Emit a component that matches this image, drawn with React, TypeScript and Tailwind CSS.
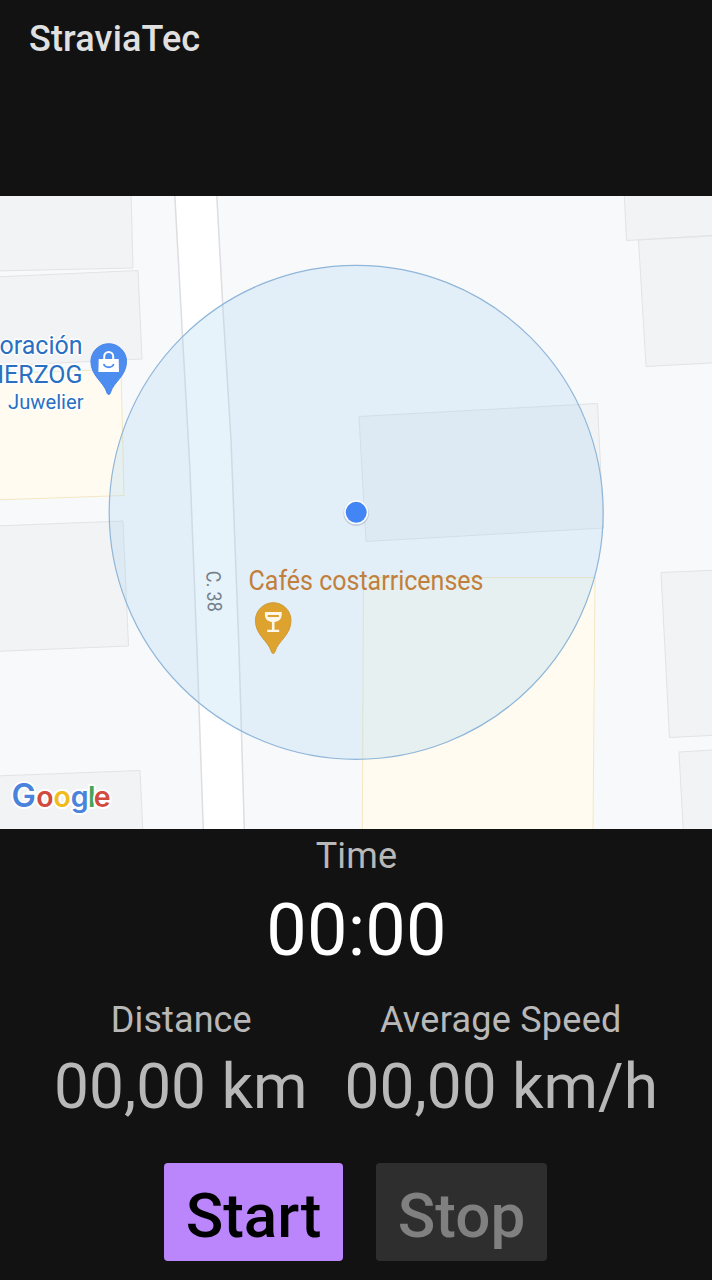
import React from "react";

const buildings = [
  "-5,190 131,190 133,268 -5,271",
  "-5,277 138,270.5 142,359 -5,366",
  "-5,526 123,521 128.500,646 -5,651.5",
  "-5,776 140,770.5 143,835 -5,835",
  "624,190 626.500,240.500 720,235 720,190",
  "638.500,240 646,366.500 720,362.500 720,235.500",
  "661,572.500 669.500,737.500 720,735 720,570",
  "679,752 683.500,835 720,835 720,749.500",
  "359,416.500 597.500,403.500 603.500,528 366,541.500",
];

const shops = [
  "-5,374 121,369 124,495.500 -5,500",
  "363.500,577.500 595,577.500 593,835 362.300,835",
];

function Pin({ x, y, fill, edge, children }: { x: number; y: number; fill: string; edge: string; children: React.ReactNode }) {
  return (
    <g transform={`translate(${x} ${y})`}>
      <path
        d="M0 33C-1.200 33-1.500 32-2 30.500C-5 20.500-17.800 14.500-17.800 0A17.800 17.800 0 0 1 17.800 0C17.800 14.500 5 20.500 2 30.500C1.500 32 1.200 33 0 33Z"
        fill={fill}
        stroke={edge}
        strokeWidth="1"
      />
      {children}
    </g>
  );
}

function MapView() {
  return (
    <svg className="block h-[633px] w-full shrink-0 bg-[#f8f9fb]" viewBox="0 196 712 633" fontFamily="Roboto, sans-serif">
      <g fill="#f1f3f4" stroke="#e1e3e5" strokeWidth="1">
        {buildings.map((p) => (
          <polygon key={p} points={p} />
        ))}
      </g>
      <g fill="#fffbf0" stroke="#f3e8c2" strokeWidth="1">
        {shops.map((p) => (
          <polygon key={p} points={p} />
        ))}
      </g>
      <path d="M174.500 190L183 345L190 470L197 650L203.500 835H244.500L239 650L231 440L223 310L216.500 190Z" fill="#fff" stroke="#dcdee1" strokeWidth="1.500" />
      <circle cx="356.200" cy="512.300" r="247" fill="#a5d4f0" fillOpacity="0.27" stroke="#8fb6d9" strokeWidth="1.200" />

      <g fill="#2a70c2" stroke="#fff" strokeWidth="3" strokeLinejoin="round" paintOrder="stroke" textAnchor="end">
        <text transform="translate(82.500 353.700) scale(0.95 1)" fontSize="26.300">Corporación</text>
        <text transform="translate(82.500 383) scale(0.95 1)" fontSize="26.300">HERZOG</text>
        <text x="83.500" y="408.500" fontSize="20.500" textLength="75.500" lengthAdjust="spacingAndGlyphs">Juwelier</text>
      </g>
      <Pin x={108.700} y={361.500} fill="#4d8df0" edge="#4a85e6">
        <path d="M-10-2.500H10L10.300 10.500H-10.300Z" fill="#fff" />
        <path d="M-4.500-2V-5A4.500 4.500 0 0 1 4.500-5V-2" fill="none" stroke="#fff" strokeWidth="2" />
        <path d="M-5 2.500C-3.500 6.800 3.500 6.800 5 2.500" fill="none" stroke="#4d8df0" strokeWidth="1.800" />
      </Pin>

      <text x="248.500" y="590" fontSize="27" fill="#c17f3c" textLength="235" lengthAdjust="spacingAndGlyphs">
        Cafés costarricenses
      </text>
      <Pin x={273.200} y={620.500} fill="#dea22f" edge="#cf9a3a">
        <path d="M-8.300-8.500H8.500V-5.500C8.500-1.500 5 1.200 1.300 1.500V9.200H6V11.500H-6V9.200H-1.300V1.500C-5 1.200-8.300-1.500-8.300-5.500Z" fill="#fff8ea" />
        <path d="M-5.500-5.500H5.700V-3.500H-5.500Z" fill="#dea22f" />
      </Pin>

      <text transform="translate(206.300 571) rotate(88)" fontSize="20" fill="#737f8a" textLength="41" lengthAdjust="spacingAndGlyphs">
        C. 38
      </text>

      <circle cx="356.200" cy="513.200" r="12.800" fill="#8797a8" opacity="0.35" />
      <circle cx="356.200" cy="512.300" r="12" fill="#fff" />
      <circle cx="356.200" cy="512.300" r="10.500" fill="#4285f4" />

      <text y="807.300" fontFamily="Inter, sans-serif" fontSize="28.500" fontWeight="600" stroke="#fff" strokeWidth="4" strokeLinejoin="round" paintOrder="stroke">
        <tspan x="11.500" fontSize="32.500" fill="#4a83dc">G</tspan>
        <tspan x="36.300" fill="#d24a3e">o</tspan>
        <tspan x="53.600" fill="#f0bb1d">o</tspan>
        <tspan x="70.800" fill="#4a83dc">g</tspan>
        <tspan x="88" fill="#3fa45c">l</tspan>
        <tspan x="93.800" fill="#d24a3e">e</tspan>
      </text>
    </svg>
  );
}

export default function App() {
  return (
    <div className="flex h-[1280px] w-[712px] flex-col overflow-hidden bg-[#121212] font-['Roboto',sans-serif] text-[#b8b8b8]">
      <header className="h-[196px] shrink-0 pt-[18px] pl-[29px]">
        <h1 className="text-[36px] leading-[42px] font-medium tracking-[0.15px] text-[#e0e0e0]">StraviaTec</h1>
      </header>
      <MapView />
      <section className="flex flex-col items-center pt-[6px]">
        <h2 className="pl-px text-[36px] leading-[42px] tracking-[0.2px]">Time</h2>
        <p className="mt-[12px] pl-px text-[72px] leading-[84px] tracking-[0.2px] text-white">00:00</p>
      </section>
      <section className="mt-[26px] flex justify-center gap-[37px]">
        <div className="flex flex-col items-center">
          <h2 className="pl-px text-[36px] leading-[42px] tracking-[0.1px]">Distance</h2>
          <p className="mt-[9px] text-[62.200px] leading-[74px]">00,00 km</p>
        </div>
        <div className="flex flex-col items-center">
          <h2 className="pr-px text-[36px] leading-[42px] tracking-[0.25px]">Average Speed</h2>
          <p className="mt-[9px] text-[62.200px] leading-[74px]">00,00 km/h</p>
        </div>
      </section>
      <div className="mt-[39px] ml-[164px] flex gap-[33px]">
        <button className="flex h-[98px] w-[179px] items-center justify-center rounded-[4px] bg-[#bb86fc] pt-[6px] text-[62px] font-medium text-black">Start</button>
        <button className="flex h-[98px] w-[171px] items-center justify-center rounded-[4px] bg-[#2e2e2e] pt-[6px] text-[62px] font-medium text-[#808080]" disabled>Stop</button>
      </div>
    </div>
  );
}
